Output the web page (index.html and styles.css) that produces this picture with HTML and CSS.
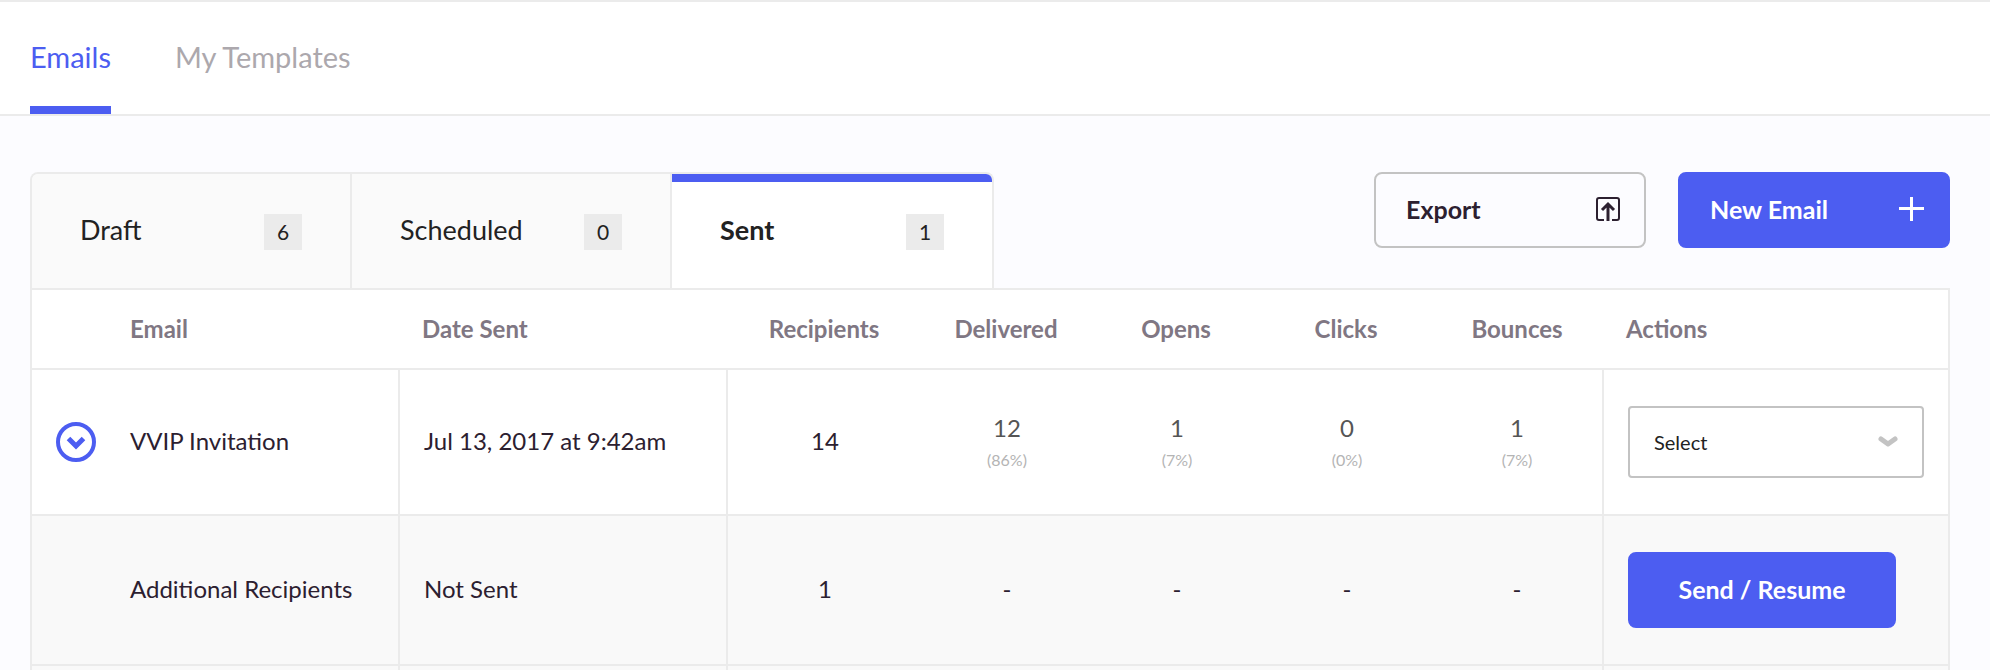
FILE: index.html
```html
<!DOCTYPE html>
<html lang="en">
<head>
    <meta charset="UTF-8">
    <title>Emails</title>
    <link rel="stylesheet" href="styles.css">
</head>
<body>
    <nav class="top-nav">
        <a href="#emails" class="active">Emails</a>
        <a href="#templates">My Templates</a>
    </nav>
    <main class="content">
        <div class="toolbar">
            <div class="tabs">
                <button class="tab">Draft <span class="count">6</span></button>
                <button class="tab">Scheduled <span class="count">0</span></button>
                <button class="tab active">Sent <span class="count">1</span></button>
            </div>
            <div class="buttons">
                <button class="btn btn-outline">
                    Export
                    <svg width="24" height="24" viewBox="0 0 24 24" fill="none" stroke="currentColor" stroke-width="2">
                        <path d="M8 23H3a2 2 0 0 1-2-2V3a2 2 0 0 1 2-2h18a2 2 0 0 1 2 2v18a2 2 0 0 1-2 2h-5"/>
                        <path d="M12 24V8M6 13l6-6 6 6" stroke-width="3"/>
                    </svg>
                </button>
                <button class="btn btn-primary">
                    New Email
                    <svg width="25" height="24" viewBox="0 0 25 24" fill="none" stroke="currentColor" stroke-width="3">
                        <path d="M12.5 0v24M0 11.5h25"/>
                    </svg>
                </button>
            </div>
        </div>
        <table class="emails">
            <colgroup>
                <col class="col-toggle">
                <col>
                <col class="col-date">
                <col class="col-recipients">
                <col class="col-stat">
                <col class="col-stat">
                <col class="col-stat">
                <col class="col-last-stat">
                <col class="col-actions">
            </colgroup>
            <thead>
                <tr>
                    <td></td>
                    <th class="name">Email</th>
                    <th>Date Sent</th>
                    <th class="num">Recipients</th>
                    <th class="num">Delivered</th>
                    <th class="num">Opens</th>
                    <th class="num">Clicks</th>
                    <th class="num">Bounces</th>
                    <th>Actions</th>
                </tr>
            </thead>
            <tbody>
                <tr>
                    <td>
                        <button class="toggle" aria-label="Toggle details">
                            <svg width="40" height="40" viewBox="0 0 40 40" fill="none" stroke="currentColor">
                                <circle cx="20" cy="20" r="18" stroke-width="4"/>
                                <path d="M12.5 16.5L20 24l7.500-7.500" stroke-width="5"/>
                            </svg>
                        </button>
                    </td>
                    <td class="line">VVIP Invitation</td>
                    <td class="line">Jul 13, 2017 at 9:42am</td>
                    <td class="num">14</td>
                    <td class="num stat">12 <small>(86%)</small></td>
                    <td class="num stat">1 <small>(7%)</small></td>
                    <td class="num stat">0 <small>(0%)</small></td>
                    <td class="num stat line">1 <small>(7%)</small></td>
                    <td class="action">
                        <div class="select">
                            <select aria-label="Action">
                                <option>Select</option>
                            </select>
                            <svg width="20" height="12" viewBox="0 0 20 12" fill="none" stroke="currentColor" stroke-width="5" stroke-linecap="round" stroke-linejoin="round">
                                <path d="M3 3l7 5 7-5"/>
                            </svg>
                        </div>
                    </td>
                </tr>
                <tr class="sub">
                    <td></td>
                    <td class="line">Additional Recipients</td>
                    <td class="line">Not Sent</td>
                    <td class="num">1</td>
                    <td class="num">-</td>
                    <td class="num">-</td>
                    <td class="num">-</td>
                    <td class="num line">-</td>
                    <td class="action"><button class="btn btn-primary btn-send">Send / Resume</button></td>
                </tr>
                <tr class="sub">
                    <td></td>
                    <td class="line"></td>
                    <td class="line"></td>
                    <td></td>
                    <td></td>
                    <td></td>
                    <td></td>
                    <td class="line"></td>
                    <td></td>
                </tr>
            </tbody>
        </table>
    </main>
</body>
</html>
```

FILE: styles.css
```css
* {
    box-sizing: border-box;
}
body {
    display: flex;
    flex-direction: column;
    margin: 0;
    height: 100vh;
    background: #fcfcff;
    color: #2c2030;
    font-family: Lato, sans-serif;
    font-size: 24px;
    line-height: 32px;
}
button, select {
    font: inherit;
    cursor: pointer;
}
.top-nav {
    display: flex;
    gap: 64px;
    padding: 0 30px;
    background: #fff;
    border-top: 2px solid #ebebeb;
    border-bottom: 2px solid #ebebeb;
}
.top-nav a {
    padding: 39px 0 33px;
    border-bottom: 8px solid transparent;
    color: #aca8ad;
    font-size: 29px;
    text-decoration: none;
}
.top-nav a.active {
    color: #4c5df1;
    border-bottom-color: #4c5df1;
}
.content {
    flex: 1;
    min-height: 0;
    padding: 56px 40px 0 30px;
    overflow: hidden;
}
.toolbar {
    display: flex;
    justify-content: space-between;
    align-items: flex-start;
}
.tabs {
    display: flex;
    border: 2px solid #ebebeb;
    border-bottom: none;
    border-radius: 8px 8px 0 0;
    overflow: hidden;
}
.tab {
    display: flex;
    justify-content: space-between;
    align-items: center;
    width: 320px;
    height: 114px;
    padding: 0 48px 2px;
    background: #fafafa;
    border: none;
    border-right: 2px solid #ebebeb;
    color: #222;
    font-size: 27px;
}
.tab.active {
    background: #fff;
    border-right: none;
    box-shadow: inset 0 8px #4c5df1;
    font-weight: bold;
}
.count {
    width: 38px;
    height: 36px;
    margin-top: 4px;
    background: #ebebeb;
    font-size: 21px;
    font-weight: normal;
    line-height: 36px;
    text-align: center;
}
.buttons {
    display: flex;
    gap: 32px;
}
.btn {
    display: flex;
    justify-content: space-between;
    align-items: center;
    width: 272px;
    height: 76px;
    padding: 0 24px 2px 30px;
    border: 2px solid #4c5df1;
    border-radius: 8px;
    font-size: 25px;
    font-weight: bold;
}
.btn-outline {
    background: transparent;
    border-color: #c3c3c3;
    color: #2c2030;
}
.btn-primary {
    background: #4c5df1;
    color: #fff;
}
.btn-send {
    justify-content: center;
    width: 268px;
    padding: 0 0 2px;
}
.emails {
    width: 100%;
    table-layout: fixed;
    border: 2px solid #ebebeb;
    border-bottom: none;
    border-spacing: 0;
    background: #fff;
}
.col-toggle {
    width: 74px;
}
.col-date {
    width: 328px;
}
.col-recipients {
    width: 194px;
}
.col-stat {
    width: 170px;
}
.col-last-stat {
    width: 172px;
}
.col-actions {
    width: 344px;
}
.emails th, .emails td {
    padding: 0 24px;
    border-bottom: 2px solid #ebebeb;
    text-align: left;
}
.emails th {
    height: 80px;
    padding: 0 22px;
    color: #807783;
}
.emails th.name {
    padding-left: 24px;
}
.emails tbody td {
    height: 146px;
}
.emails tbody .sub td {
    height: 150px;
    background: #f9f9f9;
}
.emails tbody .line {
    padding-bottom: 2px;
    border-right: 2px solid #ebebeb;
}
.emails .num {
    padding: 0 0 2px;
    text-align: center;
}
.emails th.num {
    padding: 0 2px 0 0;
}
.emails .stat, .emails .stat.line {
    padding: 3px 0 0;
    color: #555;
}
.stat small {
    display: block;
    color: #b4b4b4;
    font-size: 16px;
}
.toggle {
    display: block;
    padding: 0;
    background: none;
    border: none;
    color: #4c5df1;
}
.toggle svg {
    display: block;
}
.select {
    display: grid;
    align-items: center;
    color: #c3c3c3;
}
.select select, .select svg {
    grid-area: 1 / 1;
}
.select select {
    appearance: none;
    height: 72px;
    padding: 0 24px;
    background: #fff;
    border: 2px solid #c3c3c3;
    border-radius: 4px;
    color: #222;
    font-size: 20px;
}
.select svg {
    justify-self: end;
    margin-right: 26px;
    pointer-events: none;
}
```
